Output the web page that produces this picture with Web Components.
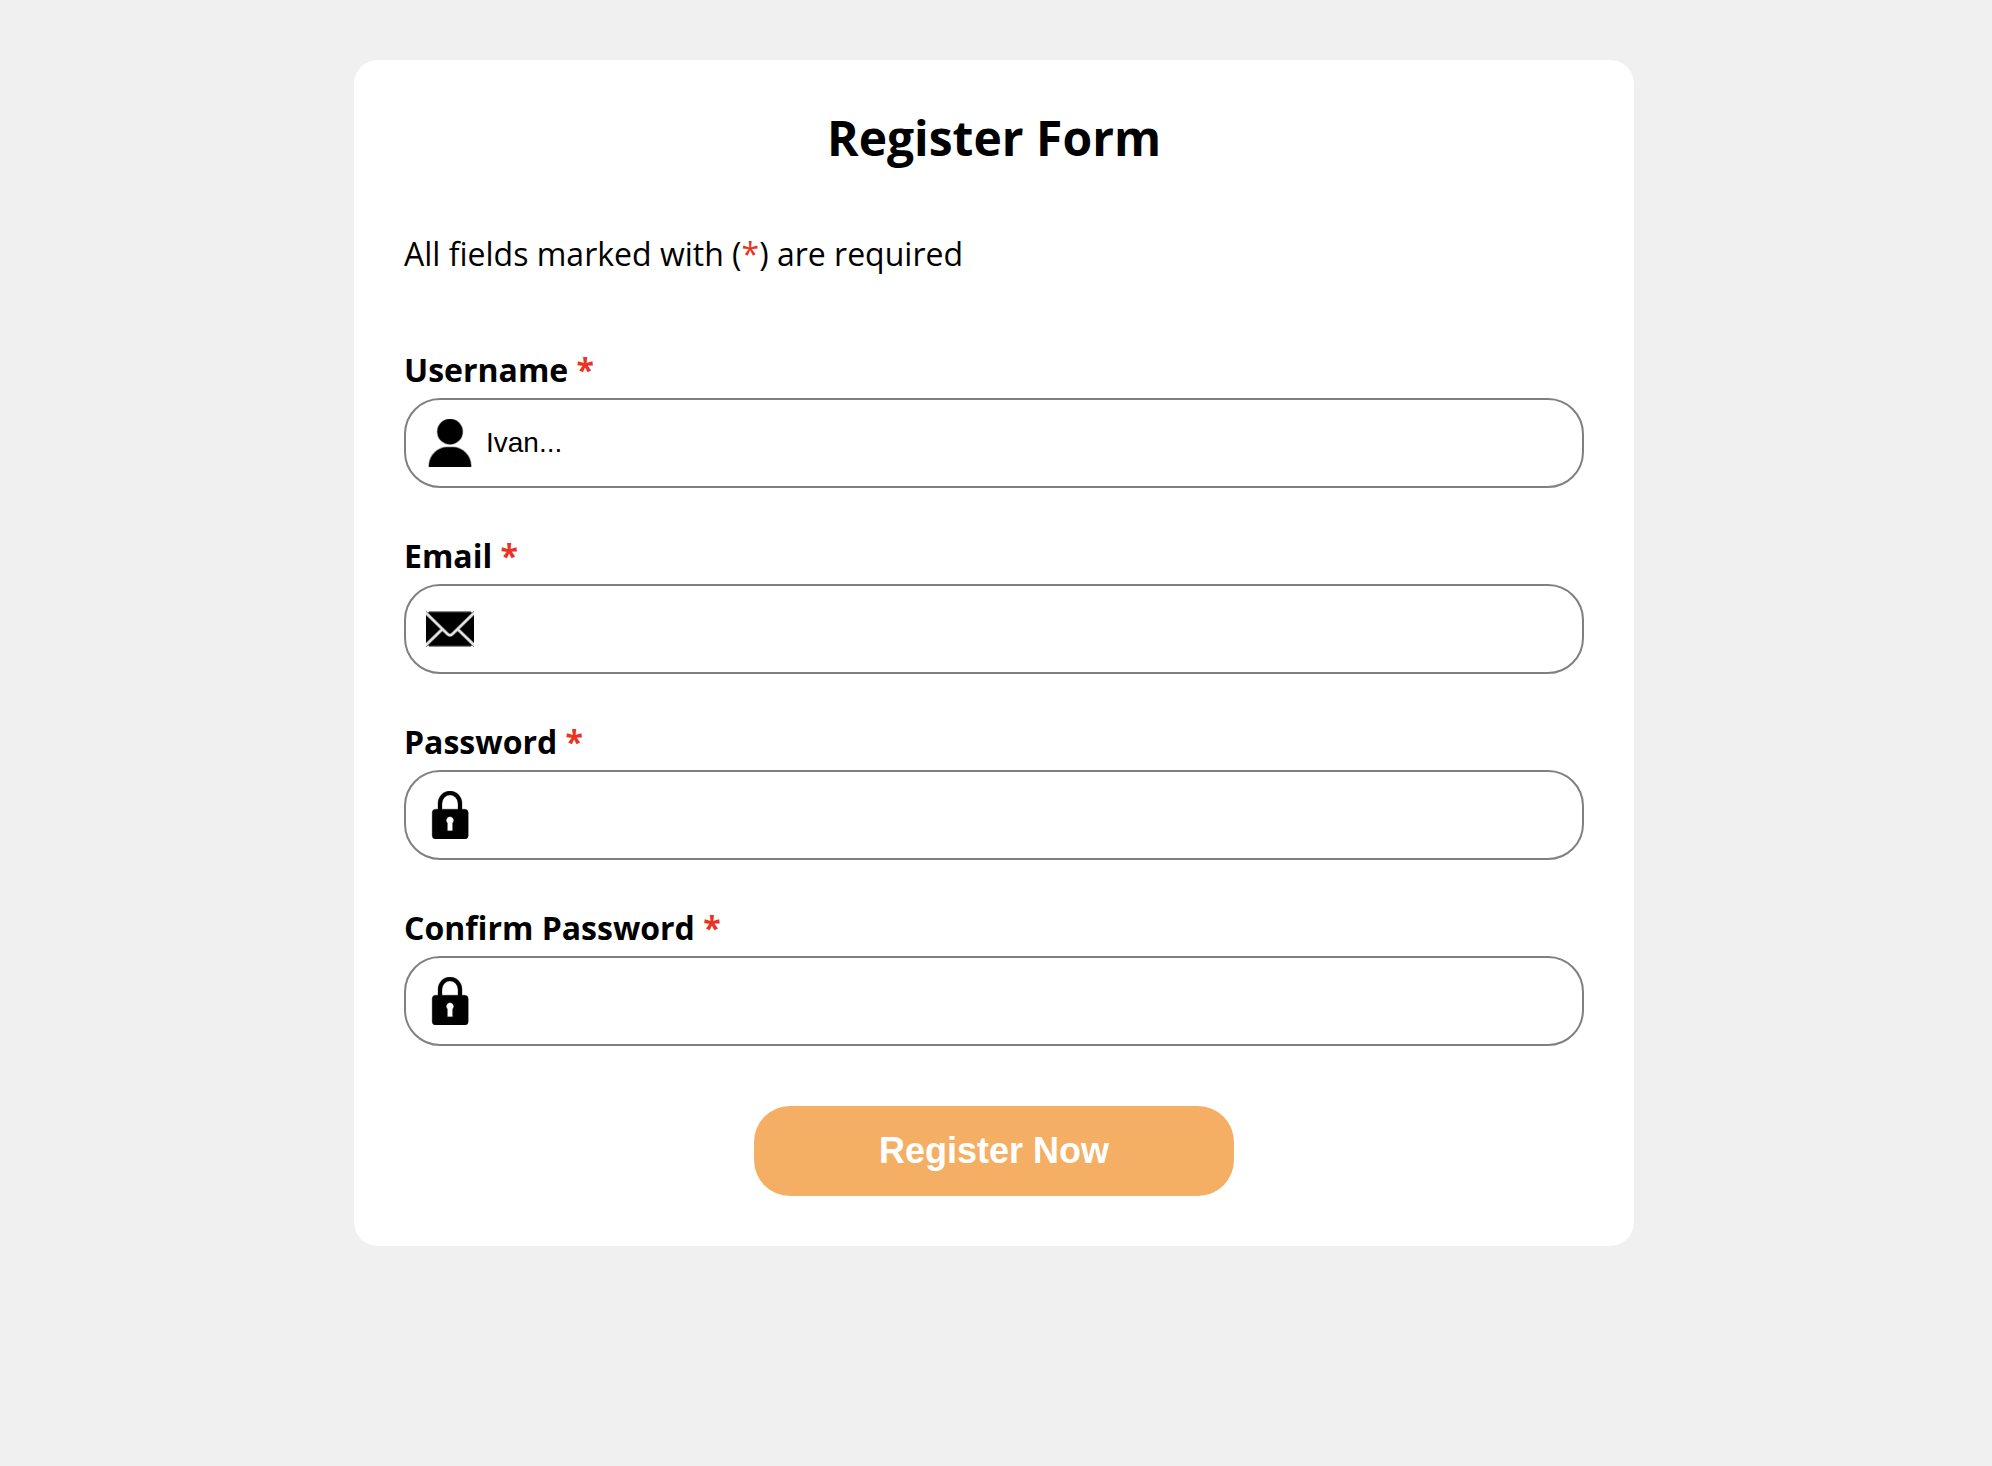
<!DOCTYPE html>
<html lang="en">
<head>
<meta charset="utf-8">
<title>Register Form</title>
<style>
  body { margin: 0; background: #f0f0f0; min-height: 100vh; font-family: "Open Sans", "Noto Sans", sans-serif; color: #000; }
</style>
</head>
<body>
<register-form>
  <form-field label="Username" value="Ivan..."><form-icon slot="icon" name="user"></form-icon></form-field>
  <form-field label="Email" type="email"><form-icon slot="icon" name="mail"></form-icon></form-field>
  <form-field label="Password" type="password"><form-icon slot="icon" name="lock"></form-icon></form-field>
  <form-field label="Confirm Password" type="password"><form-icon slot="icon" name="lock"></form-icon></form-field>
  <submit-button slot="action">Register Now</submit-button>
</register-form>
<script>
class BaseElement extends HTMLElement {
  constructor() { super(); this.attachShadow({ mode: "open" }); }
  connectedCallback() { this.shadowRoot.innerHTML = this.render(); }
}

class FormIcon extends BaseElement {
  render() {
    const shapes = {
      user: `<g stroke="#000" stroke-opacity=".35" stroke-width="1.4"><circle cx="24" cy="12.700" r="12.600"/><path d="M3 49v-3C3.500 36 12 28.200 21 28.200h6C36 28.200 44.500 36 45 46v3z"/></g>`,
      mail: `<path d="M3 7h42l3 2.500v29L45 41H3l-3-2.500v-29z"/>
        <path d="M3 6.700h42M3 41.300h42" fill="none" stroke="#888" stroke-width="1.300"/>
        <path d="M-1 7l22.500 22q2.500 2.400 5 0L49 7M-1 41l17-16.500M49 41L32 24.500" fill="none" stroke="#777" stroke-width="3.500"/>
        <path d="M-1 7l22.500 22q2.500 2.400 5 0L49 7M-1 41l17-16.500M49 41L32 24.500" fill="none" stroke="#e8e8e8" stroke-width="2.100"/>`,
      lock: `<path d="M14 20v-7.500a10 10.500 0 0 1 20 0V20" fill="none" stroke="#000" stroke-width="4"/>
        <path d="M14 18v-5.500a10 10.500 0 0 1 20 0V18" fill="none" stroke="#000" stroke-opacity=".3" stroke-width="5"/>
        <rect x="6.200" y="18.200" width="36" height="29.800" rx="3.500" stroke="#000" stroke-opacity=".35" stroke-width="1"/>
        <path d="M24 25.800a4 3.800 0 0 1 2.300 6.500v7.300h-4.600v-7.300A4 3.800 0 0 1 24 25.800z" fill="#fff" stroke="#fff" stroke-opacity=".3"/>`
    };
    return `<style>:host{display:block;width:48px;height:48px}svg{display:block}</style>
      <svg width="48" height="48" viewBox="0 0 48 48" aria-hidden="true">${shapes[this.getAttribute("name")]}</svg>`;
  }
}

class FormField extends BaseElement {
  render() {
    const type = this.getAttribute("type") || "text";
    const value = this.getAttribute("value") || "";
    return `<style>
      :host{display:block}
      label{display:block;font-size:32px;font-weight:700;line-height:44px;padding-bottom:6px}
      label span{color:#ea3323}
      .box{box-sizing:border-box;height:90px;border:2px solid #808080;border-radius:36px;display:flex;align-items:center;padding:0 20px;gap:12px;background:#fff}
      .value{flex:1;font:28px/32px "Liberation Sans",Arial,sans-serif}
      </style>
      <label>${this.getAttribute("label")} <span>*</span></label>
      <div class="box" data-type="${type}"><slot name="icon"></slot><div class="value">${value}</div></div>`;
  }
}

class SubmitButton extends BaseElement {
  render() {
    return `<style>
      :host{display:flex;justify-content:center}
      button{width:480px;height:90px;border:0;border-radius:36px;background:#f4af65;color:#fff;padding:0;font:700 36px/42px "Liberation Sans",Arial,sans-serif}
      </style><button type="button"><slot></slot></button>`;
  }
}

class RegisterForm extends BaseElement {
  render() {
    return `<style>
      :host{display:flex;justify-content:center;padding:60px 4px 60px 0}
      .card{box-sizing:border-box;width:1280px;height:1186px;padding:45px 50px 50px;background:#fff;border-radius:24px;display:flex;flex-direction:column}
      h1{margin:0;text-align:center;font-size:48px;line-height:66px;font-weight:700}
      p{margin:61px 0 0;font-size:32px;line-height:44px}
      p span{color:#ea3323}
      .fields{display:flex;flex-direction:column;gap:46px;margin-top:72px}
      .action{margin-top:60px}
      </style>
      <section class="card">
        <h1>Register Form</h1>
        <p>All fields marked with (<span>*</span>) are required</p>
        <div class="fields"><slot></slot></div>
        <div class="action"><slot name="action"></slot></div>
      </section>`;
  }
}

customElements.define("form-icon", FormIcon);
customElements.define("form-field", FormField);
customElements.define("submit-button", SubmitButton);
customElements.define("register-form", RegisterForm);
</script>
</body>
</html>
